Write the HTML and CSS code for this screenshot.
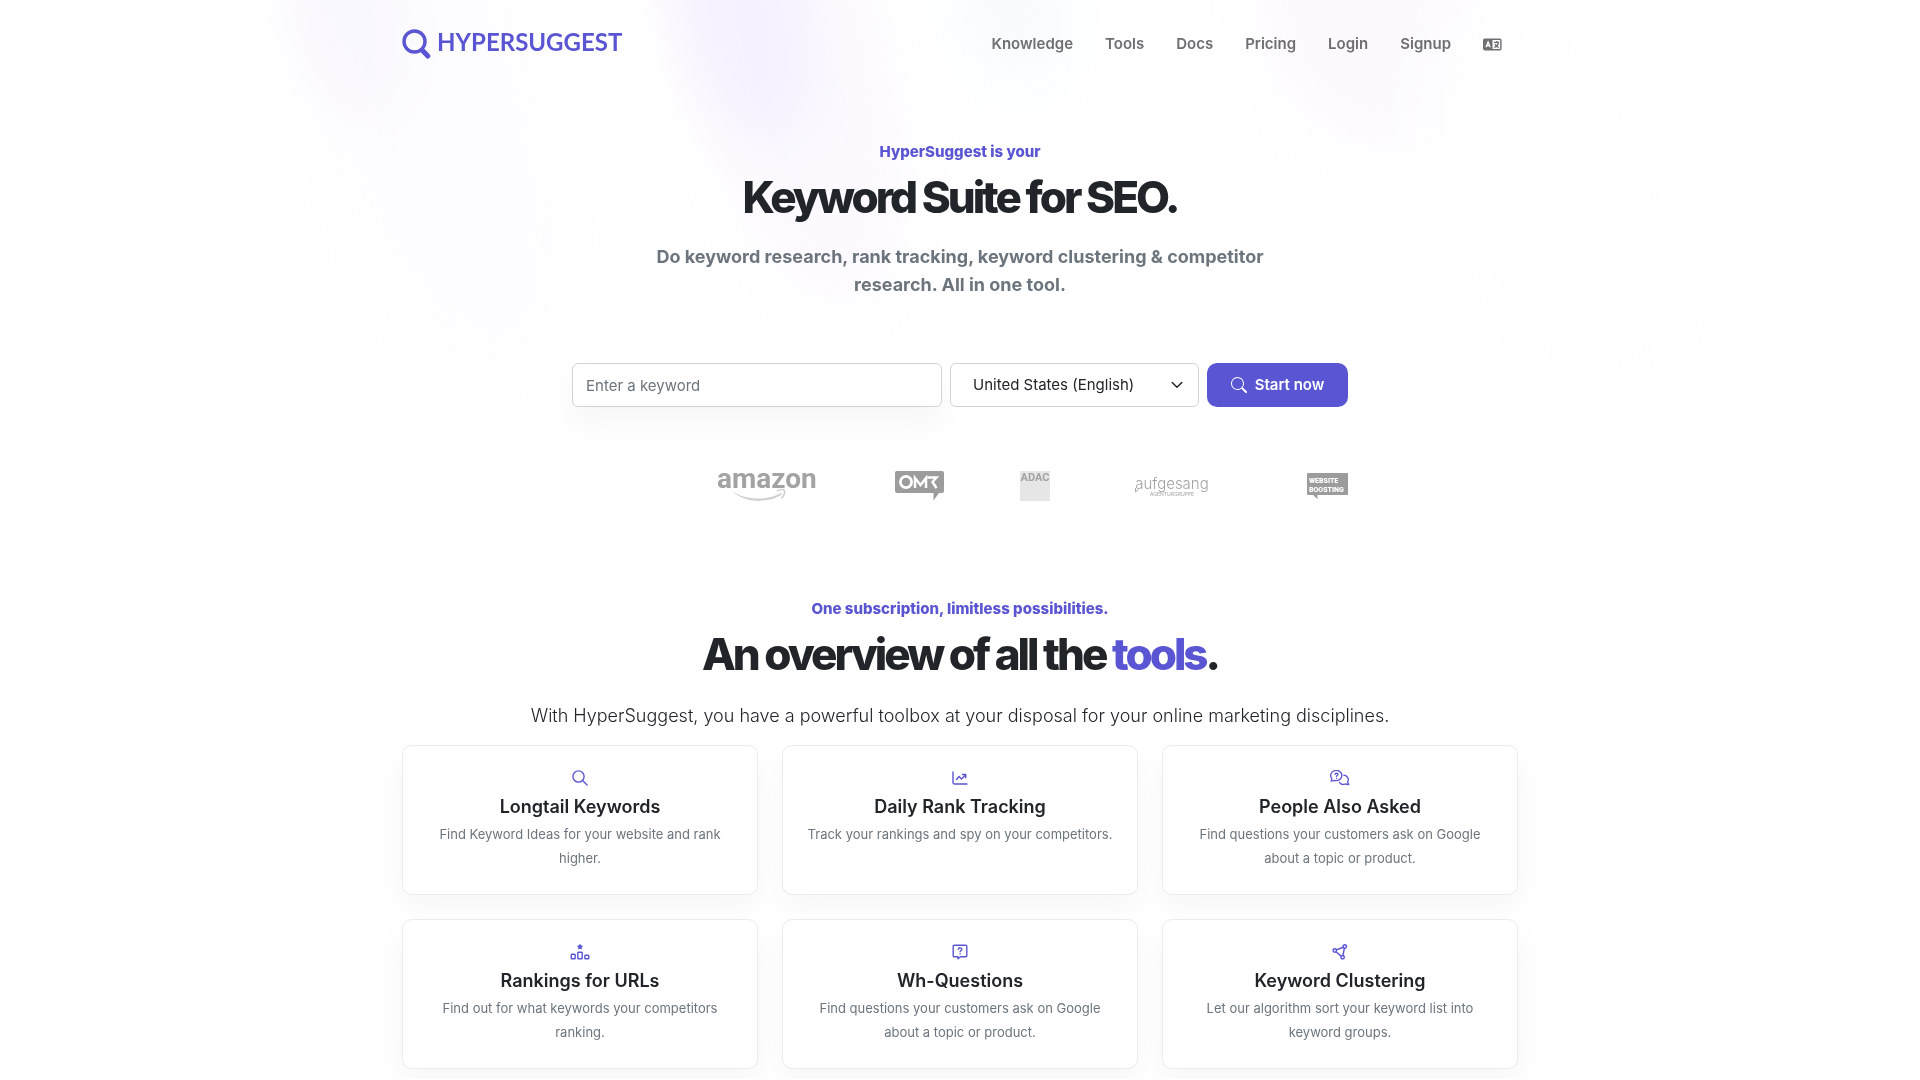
FILE: index.html
```html
<!DOCTYPE html>
<html lang="en">
<head>
<meta charset="utf-8">
<meta name="viewport" content="width=device-width, initial-scale=1">
<title>HyperSuggest – Keyword Suite for SEO</title>
<link rel="stylesheet" href="styles.css">
</head>
<body>
<svg class="backdrop" viewBox="0 0 1920 500" preserveAspectRatio="xMidYMin slice" aria-hidden="true">
  <defs><filter id="soft" x="-50%" y="-50%" width="200%" height="200%" color-interpolation-filters="sRGB"><feGaussianBlur stdDeviation="28"/></filter></defs>
  <g filter="url(#soft)">
    <ellipse cx="420" cy="80" rx="120" ry="310" fill="#fdfcff" transform="rotate(-18 420 80)"/>
    <ellipse cx="340" cy="0" rx="60" ry="120" fill="#faf8ff" transform="rotate(-15 340 0)"/>
    <ellipse cx="790" cy="70" rx="110" ry="250" fill="#fcfaff" transform="rotate(-16 790 70)"/>
    <ellipse cx="740" cy="0" rx="65" ry="150" fill="#f6f1ff" transform="rotate(-16 740 0)"/>
    <ellipse cx="1010" cy="0" rx="70" ry="100" fill="#f9fcff" transform="rotate(-15 1010 0)"/>
    <ellipse cx="1370" cy="20" rx="120" ry="140" fill="#fcfaff" transform="rotate(-22 1370 20)"/>
    <ellipse cx="1560" cy="200" rx="110" ry="200" fill="#fefeff" transform="rotate(-28 1560 200)"/>
  </g>
</svg>

<header class="container site-header">
  <a class="brand" href="#">
    <svg class="brand-mark" viewBox="0 0 29 30" aria-hidden="true"><circle cx="12.500" cy="12.500" r="10.500" fill="none" stroke="currentColor" stroke-width="3.400"/><path d="M21 22l4.800 5" stroke="currentColor" stroke-width="5" stroke-linecap="round"/></svg>
    <span class="brand-name">HYPERSUGGEST</span>
  </a>
  <nav class="main-nav" aria-label="Main">
    <a href="#">Knowledge</a>
    <a href="#">Tools</a>
    <a href="#">Docs</a>
    <a href="#">Pricing</a>
    <a href="#">Login</a>
    <a href="#">Signup</a>
    <a href="#" class="lang" aria-label="Language">
      <svg viewBox="0 0 19 13" aria-hidden="true"><rect x=".7" y="1.200" width="17.200" height="10.500" rx="1.200" fill="none" stroke="currentColor" stroke-width="1.400"/><path d="M1 1.200h8.500v10.500H1z" fill="currentColor"/><path d="M3 9.200l2.100-5.200 2.100 5.200M3.900 7.600h2.400" fill="none" stroke="#fff" stroke-width="1.300"/><path d="M11 4.300h5.200M13.600 3v1.300M15.500 4.500c-.6 2.500-2.300 4.300-4.200 5M12 6c.8 1.700 2 2.900 3.900 3.500" fill="none" stroke="currentColor" stroke-width="1.200"/></svg>
    </a>
  </nav>
</header>

<main>
  <section class="container hero">
    <p class="eyebrow">HyperSuggest is your</p>
    <h1 class="title">Keyword Suite for SEO.</h1>
    <p class="lead">Do keyword research, rank tracking, keyword clustering &amp; competitor research. All in one tool.</p>
    <form class="search">
      <input class="field keyword" type="text" placeholder="Enter a keyword" aria-label="Keyword">
      <div class="select-wrap">
        <select class="field region" aria-label="Region"><option>United States (English)</option></select>
        <svg class="chevron" viewBox="0 0 12 12" aria-hidden="true"><path d="M1.200 3.500L6 8.300l4.800-4.800" fill="none" stroke="currentColor" stroke-width="1.500" stroke-linecap="round" stroke-linejoin="round"/></svg>
      </div>
      <button class="submit" type="button">
        <svg viewBox="0 0 16 16" fill="currentColor" aria-hidden="true"><path d="M11.742 10.344a6.500 6.500 0 1 0-1.397 1.398c.03.04.062.078.098.115l3.850 3.850a1 1 0 0 0 1.415-1.414l-3.850-3.850a1 1 0 0 0-.116-.097zM12 6.500a5.500 5.500 0 1 1-11 0 5.500 5.500 0 0 1 11 0z"/></svg>
        <span>Start now</span>
      </button>
    </form>
    <div class="partners">
      <svg width="102" height="32" viewBox="0 0 102 32"><text class="amazon-name" x="0" y="18">amazon</text><path d="M15 21c14 9.500 34 10 49 2l1 1.200c-14 10-38 8.500-50-3.200z" fill="#cfcfcf"/><path d="M60 21c3-1.700 6-1.700 7.500-.6.400 2.600-1 6-3 8" fill="none" stroke="#cfcfcf" stroke-width="1.500"/></svg>
      <svg width="49" height="32" viewBox="0 0 49 32"><path d="M2 1h45a2 2 0 0 1 2 2v18a2 2 0 0 1-2 2h-3l-5.500 7.500V23H2a2 2 0 0 1-2-2V3a2 2 0 0 1 2-2z" fill="#9c9c9c"/><circle cx="11" cy="12" r="5.600" fill="none" stroke="#fff" stroke-width="2.700"/><path d="M20 18V8l5.500 7L31 8v10M32.500 7.500h9l-4 4.500 4 6" fill="none" stroke="#fff" stroke-width="2.500"/></svg>
      <svg width="30" height="32" viewBox="0 0 30 32"><path d="M0 1h30v30H0z" fill="#e6e6e6"/><text class="adac-name" x="15" y="11">ADAC</text></svg>
      <svg width="92" height="32" viewBox="0 0 92 32"><text class="aufgesang-name" x="46" y="19">aufgesang</text><path d="M9.500 18v4l3-2.500" fill="none" stroke="#aaa"/><text class="aufgesang-sub" x="46" y="26">AGENTURGRUPPE</text></svg>
      <svg width="54" height="32" viewBox="0 0 54 32"><path d="M14 3h39a1 1 0 0 1 1 1v20a1 1 0 0 1-1 1H23.500v4L19 25h-5a1 1 0 0 1-1-1V4a1 1 0 0 1 1-1z" fill="#9c9c9c"/><text class="boosting" x="15" y="13">WEBSITE</text><text class="boosting" x="15" y="22">BOOSTING</text></svg>
    </div>
  </section>

  <section class="container tools">
    <p class="eyebrow">One subscription, limitless possibilities.</p>
    <h2 class="title">An overview of all the <span class="accent">tools</span>.</h2>
    <p class="intro">With HyperSuggest, you have a powerful toolbox at your disposal for your online marketing disciplines.</p>
    <div class="cards">
      <article class="card">
        <svg class="icon" viewBox="0 0 16 16" fill="none" stroke="currentColor" stroke-width="1.400" stroke-linecap="round" aria-hidden="true"><circle cx="6.500" cy="6.500" r="5.600"/><path d="M10.600 10.600l4.500 4.500"/></svg>
        <h3>Longtail Keywords</h3>
        <p>Find Keyword Ideas for your website and rank higher.</p>
      </article>
      <article class="card">
        <svg class="icon" viewBox="0 0 16 16" fill="none" stroke="currentColor" stroke-width="1.400" stroke-linecap="round" stroke-linejoin="round" aria-hidden="true"><path d="M1 2v10.500a1.500 1.500 0 0 0 1.500 1.500H15M4.500 9.500l2.500-3 2.500 2.500 4-4M10.500 4.500h3.200v3.200"/></svg>
        <h3>Daily Rank Tracking</h3>
        <p>Track your rankings and spy on your competitors.</p>
      </article>
      <article class="card">
        <svg class="icon icon-wide" viewBox="0 0 20 16" fill="none" stroke="currentColor" stroke-width="1.300" stroke-linecap="round" stroke-linejoin="round" aria-hidden="true"><path d="M1.800 8.600A5.600 5.100 0 1 1 4.600 10.400L1.200 11.200zM5 4.300c.2-1.400 3-1.400 3 .1 0 1.100-1.500 1-1.500 2.200M6.500 8.300v.1M13.800 5.100c3.800.4 5.400 3.900 3.800 7l1.200 2.500-3.600-.6c-2.300.9-4.700.2-5.800-1.600"/></svg>
        <h3>People Also Asked</h3>
        <p>Find questions your customers ask on Google about a topic or product.</p>
      </article>
      <article class="card">
        <svg class="icon icon-wide" viewBox="0 0 20 16" fill="none" stroke="currentColor" stroke-width="1.400" stroke-linejoin="round" aria-hidden="true"><path d="M10 .3l.8 1.500 1.700.3-1.200 1.200.3 1.700-1.600-.8-1.600.8.3-1.700-1.200-1.200 1.700-.3z" fill="currentColor" stroke-width=".8"/><rect x="1.200" y="10.200" width="4" height="4.600" rx=".8"/><rect x="7.800" y="8.200" width="4.400" height="6.600" rx=".8"/><rect x="14.800" y="11.200" width="4" height="3.600" rx=".8"/></svg>
        <h3>Rankings for URLs</h3>
        <p>Find out for what keywords your competitors ranking.</p>
      </article>
      <article class="card">
        <svg class="icon" viewBox="0 0 16 16" fill="none" stroke="currentColor" stroke-width="1.400" stroke-linecap="round" stroke-linejoin="round" aria-hidden="true"><path d="M2.200 1.200h11.600a1 1 0 0 1 1 1v9.600a1 1 0 0 1-1 1H8.500l-2.500 2v-2H2.200a1 1 0 0 1-1-1V2.200a1 1 0 0 1 1-1zM6.300 5.200c.2-1.900 3.500-1.800 3.500.1 0 1.200-1.700 1.200-1.700 2.500M8.100 9.800v.1"/></svg>
        <h3>Wh-Questions</h3>
        <p>Find questions your customers ask on Google about a topic or product.</p>
      </article>
      <article class="card">
        <svg class="icon" viewBox="0 0 16 16" fill="none" stroke="currentColor" stroke-width="1.500" aria-hidden="true"><circle cx="2.800" cy="6.500" r="1.700"/><circle cx="12.800" cy="2.500" r="1.700"/><circle cx="10.600" cy="13.300" r="1.700"/><path d="M4.400 5.900l6.800-2.700M12.400 4.200l-1.500 7.400M4 7.700l5.300 4.500"/></svg>
        <h3>Keyword Clustering</h3>
        <p>Let our algorithm sort your keyword list into keyword groups.</p>
      </article>
    </div>
  </section>
</main>
</body>
</html>
```
FILE: styles.css
```css
* { box-sizing: border-box; }

body {
  margin: 0;
  position: relative;
  background: #fff;
  color: #212529;
  font-family: Inter, sans-serif;
}

h1, h2, h3, p { margin: 0; }

.backdrop {
  position: absolute;
  inset: 0 0 auto;
  z-index: -1;
  width: 100%;
  height: 500px;
}

.container {
  max-width: 1164px;
  margin: 0 auto;
  padding: 0 24px;
}

.site-header {
  display: flex;
  justify-content: space-between;
  align-items: center;
  padding-top: 29px;
}

.brand {
  display: flex;
  gap: 6px;
  color: #5a55d2;
  text-decoration: none;
}

.brand-mark { width: 29px; height: 30px; }

.brand-name {
  font: 700 24px/26px Lato, sans-serif;
}

.main-nav {
  display: flex;
  align-items: center;
  gap: 32px;
  padding-right: 16px;
}

.main-nav a {
  color: #6e6e73;
  font-size: 15px;
  font-weight: 600;
  line-height: 24px;
  text-decoration: none;
}

.main-nav .lang { display: flex; }
.lang svg { width: 19px; height: 13px; }

.hero, .tools {
  display: flex;
  flex-direction: column;
  align-items: center;
  text-align: center;
}

.hero { padding-top: 81px; }

.eyebrow {
  color: #5a55d2;
  font-size: 15px;
  font-weight: 800;
  line-height: 24px;
}

.title {
  margin-top: 7px;
  font-size: 44px;
  font-weight: 800;
  letter-spacing: -3px;
  line-height: 52px;
}

.accent { color: #5a55d2; }

.lead {
  max-width: 640px;
  margin-top: 20px;
  color: #6c757d;
  font-size: 18px;
  font-weight: 700;
  line-height: 28px;
}

.search {
  display: grid;
  grid-template-columns: 370fr 249fr 141fr;
  gap: 8px;
  width: 100%;
  max-width: 776px;
  margin-top: 64px;
}

.field {
  width: 100%;
  height: 44px;
  border: 1px solid #d2d2d7;
  border-radius: 6px;
  background: #fff;
  color: #212529;
  font: 400 15px/24px Inter, sans-serif;
}

.keyword {
  padding: 0 13px;
  box-shadow: 0 16px 32px rgba(0, 0, 0, .04);
}

.keyword::placeholder { color: #6c757d; opacity: 1; }

.select-wrap { position: relative; }

.region {
  padding: 0 40px 0 22px;
  appearance: none;
}

.chevron {
  position: absolute;
  top: 16px;
  right: 16px;
  width: 12px;
  height: 12px;
  pointer-events: none;
}

.submit {
  display: flex;
  align-items: center;
  justify-content: center;
  gap: 8px;
  height: 44px;
  padding: 0;
  border: 0;
  border-radius: 10px;
  background: #5a55d2;
  color: #fff;
  font: 600 15px/24px Inter, sans-serif;
}

.submit svg { width: 16px; height: 16px; }

.partners {
  display: flex;
  justify-content: flex-end;
  gap: 76px;
  width: 100%;
  max-width: 776px;
  margin-top: 63px;
}

.partners text { fill: #a3a3a3; }

.partners .amazon-name { font: 700 28px Roboto, sans-serif; }
.partners .adac-name { font: 700 11px Roboto, sans-serif; text-anchor: middle; }
.partners .aufgesang-name { font: 300 15px Inter, sans-serif; text-anchor: middle; }
.partners .aufgesang-sub { font: 400 5px Inter, sans-serif; text-anchor: middle; }
.partners .boosting { font: 900 7px Roboto, sans-serif; fill: #fff; }

.tools { padding-top: 95px; padding-bottom: 10px; }

.intro {
  margin-top: 22px;
  font-size: 18px;
  font-weight: 300;
  line-height: 28px;
}

.cards {
  display: grid;
  grid-template-columns: repeat(3, 1fr);
  gap: 24px;
  width: 100%;
  margin-top: 15px;
}

.card {
  display: flex;
  flex-direction: column;
  align-items: center;
  padding: 24px;
  border: 1px solid #ebebed;
  border-radius: 10px;
  background: #fff;
  box-shadow: 0 12px 32px rgba(0, 0, 0, .04);
}

.icon { width: 16px; height: 16px; color: #5a55d2; }
.icon-wide { width: 20px; }

.card h3 {
  margin-top: 8px;
  font-size: 18px;
  font-weight: 600;
  line-height: 26px;
}

.card p {
  margin-top: 2px;
  color: #6c757d;
  font-size: 13px;
  line-height: 24px;
}
```
